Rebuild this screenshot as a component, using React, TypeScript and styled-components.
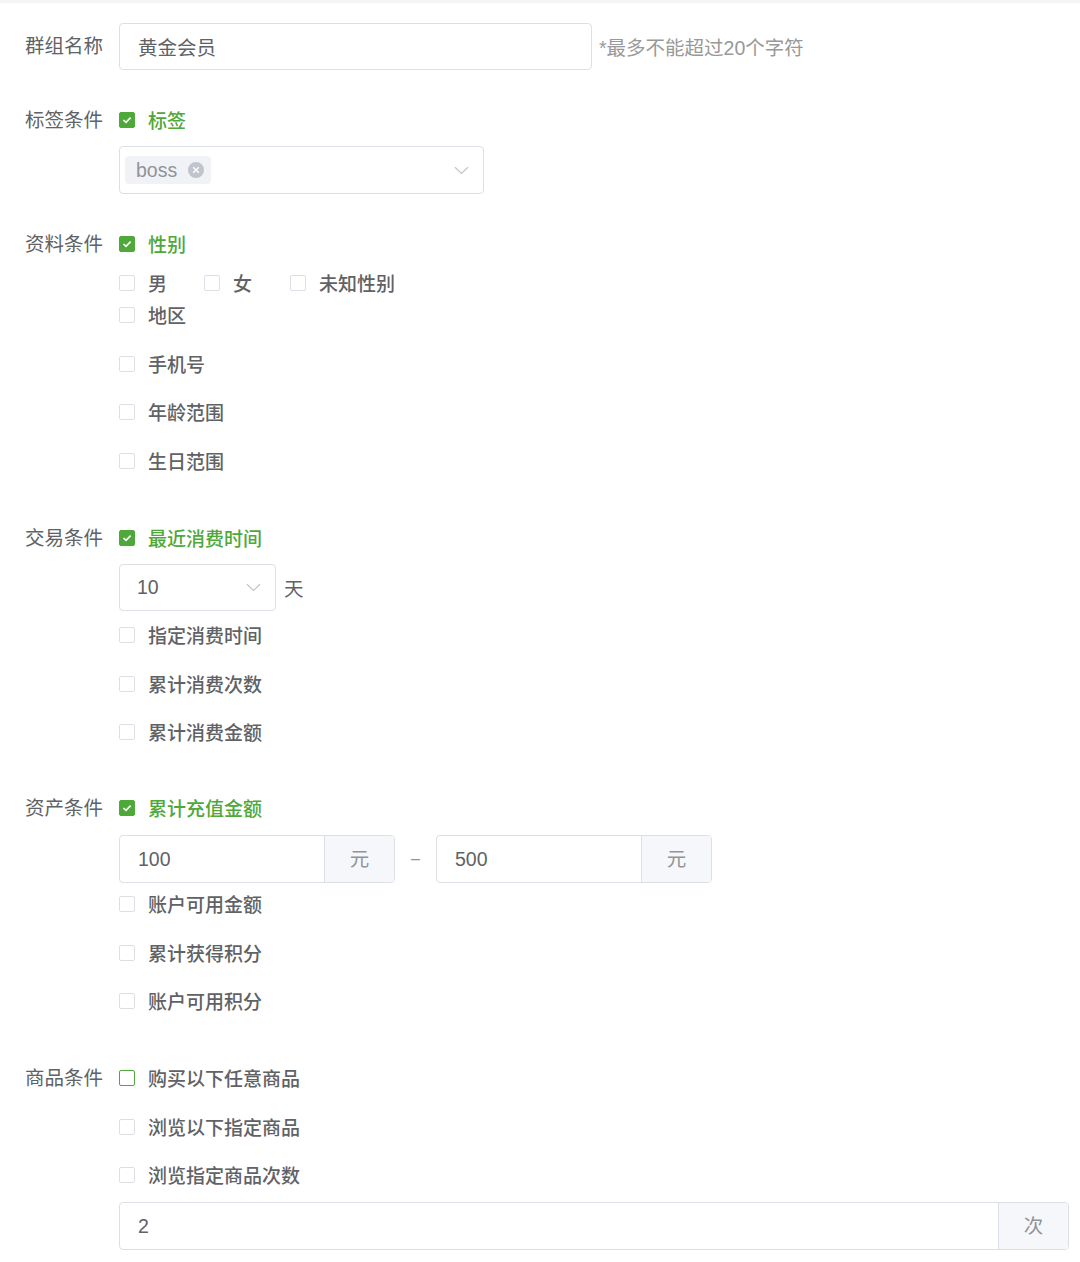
import React from "react";
import styled, { createGlobalStyle } from "styled-components";

const GlobalStyle = createGlobalStyle`
  html, body {
    margin: 0;
    padding: 0;
    background: #fff;
  }
  body {
    font-family: "Helvetica Neue", "Liberation Sans", "Noto Sans CJK SC", sans-serif;
    color: #606266;
  }
`;

const Page = styled.div`
  border-top: 3px solid #f4f5f7;
  padding: 20px 12px 12px 25px;
`;

const FormItem = styled.div<{ $gap: number }>`
  display: flex;
  align-items: flex-start;
  margin-bottom: ${(p) => p.$gap}px;
`;

const Label = styled.div<{ $line: number }>`
  width: 94px;
  flex-shrink: 0;
  font-size: 19.5px;
  line-height: ${(p) => p.$line}px;
  color: #606266;
  white-space: nowrap;
`;

const Content = styled.div`
  flex: 1;
  display: flex;
  flex-direction: column;
  align-items: flex-start;
`;

const Row = styled.div<{ $mt?: number }>`
  display: flex;
  align-items: center;
  margin-top: ${(p) => p.$mt ?? 0}px;
`;

const TextInput = styled.div<{ $width: number }>`
  box-sizing: border-box;
  width: ${(p) => p.$width}px;
  height: 47px;
  border: 1px solid #dcdfe6;
  border-radius: 4px;
  padding: 0 18px;
  display: flex;
  align-items: center;
  font-size: 19.5px;
  color: #606266;
`;

const Hint = styled.span`
  margin-left: 7px;
  font-size: 19.5px;
  color: #999;
`;

const CheckLine = styled.label<{ $mt?: number; $mr?: number }>`
  display: flex;
  align-items: center;
  height: 32px;
  margin-top: ${(p) => p.$mt ?? 0}px;
  margin-right: ${(p) => p.$mr ?? 0}px;
  cursor: pointer;
`;

const Box = styled.span<{ $checked?: boolean; $focus?: boolean }>`
  box-sizing: border-box;
  width: 16px;
  height: 16px;
  border-radius: 2px;
  border: 1px solid
    ${(p) => (p.$checked || p.$focus ? "#4fa83a" : "#dcdfe6")};
  background: ${(p) => (p.$checked ? "#4fa83a" : "#fff")};
  display: flex;
  align-items: center;
  justify-content: center;
  margin-right: 13px;
`;

const CheckText = styled.span<{ $checked?: boolean }>`
  font-size: 19px;
  font-weight: 500;
  color: ${(p) => (p.$checked ? "#4fa83a" : "#606266")};
  white-space: nowrap;
  margin-top: -1px;
`;

const SelectBox = styled.div<{ $width: number; $height: number }>`
  box-sizing: border-box;
  width: ${(p) => p.$width}px;
  height: ${(p) => p.$height}px;
  border: 1px solid #dcdfe6;
  border-radius: 4px;
  display: flex;
  align-items: center;
  justify-content: space-between;
  padding: 0 14px 0 5px;
  font-size: 19.5px;
  color: #606266;
`;

const SelectValue = styled.span`
  padding-left: 12px;
`;

const Tag = styled.span`
  display: inline-flex;
  align-items: center;
  height: 28px;
  padding: 0 7px 0 11px;
  border-radius: 4px;
  background: #f0f2f5;
  color: #909399;
  font-size: 19.5px;
`;

const TagClose = styled.span`
  width: 16px;
  height: 16px;
  border-radius: 50%;
  background: #c0c4cc;
  margin-left: 11px;
  display: inline-flex;
  align-items: center;
  justify-content: center;
`;

const Unit = styled.span`
  margin-left: 8px;
  font-size: 19.5px;
  color: #606266;
`;

const InputGroup = styled.div<{ $width: number }>`
  box-sizing: border-box;
  width: ${(p) => p.$width}px;
  height: 48px;
  border: 1px solid #dcdfe6;
  border-radius: 4px;
  display: flex;
  overflow: hidden;
`;

const GroupField = styled.div`
  flex: 1;
  display: flex;
  align-items: center;
  padding: 0 18px;
  font-size: 19.5px;
  color: #606266;
`;

const Append = styled.div`
  width: 70px;
  border-left: 1px solid #dcdfe6;
  background: #f5f7fa;
  display: flex;
  align-items: center;
  justify-content: center;
  padding-bottom: 4px;
  box-sizing: border-box;
  font-size: 19.5px;
  color: #909399;
`;

const RangeDash = styled.span`
  width: 41px;
  text-align: center;
  color: #909399;
  font-size: 16px;
`;

const Arrow = () => (
  <svg width="15" height="9" viewBox="0 0 15 9" fill="none">
    <path d="M1 1.2 L7.5 7.5 L14 1.2" stroke="#c0c4cc" strokeWidth="1.2" />
  </svg>
);

const Tick = () => (
  <svg width="10" height="8" viewBox="0 0 10 8" fill="none">
    <path d="M1.5 4 L4 6.4 L8.6 1.6" stroke="#fff" strokeWidth="1.6" />
  </svg>
);

const CloseX = () => (
  <svg width="8" height="8" viewBox="0 0 8 8">
    <path d="M1.2 1.2 L6.8 6.8 M6.8 1.2 L1.2 6.8" stroke="#fff" strokeWidth="1.4" />
  </svg>
);

type CheckProps = {
  text: string;
  checked?: boolean;
  focus?: boolean;
  mt?: number;
  mr?: number;
};

const Check: React.FC<CheckProps> = ({ text, checked, focus, mt, mr }) => (
  <CheckLine $mt={mt} $mr={mr}>
    <Box $checked={checked} $focus={focus}>
      {checked && <Tick />}
    </Box>
    <CheckText $checked={checked}>{text}</CheckText>
  </CheckLine>
);

// vertical space between stacked checkbox lines
const STEP = 16.5;

const App: React.FC = () => {
  return (
    <Page>
      <GlobalStyle />

      <FormItem $gap={34}>
        <Label $line={47}>群组名称</Label>
        <Content>
          <Row>
            <TextInput $width={473}>黄金会员</TextInput>
            <Hint>*最多不能超过20个字符</Hint>
          </Row>
        </Content>
      </FormItem>

      <FormItem $gap={34}>
        <Label $line={32}>标签条件</Label>
        <Content>
          <Check text="标签" checked />
          <Row $mt={10}>
            <SelectBox $width={365} $height={48}>
              <Tag>
                boss
                <TagClose>
                  <CloseX />
                </TagClose>
              </Tag>
              <Arrow />
            </SelectBox>
          </Row>
        </Content>
      </FormItem>

      <FormItem $gap={45.5}>
        <Label $line={32}>资料条件</Label>
        <Content>
          <Check text="性别" checked />
          <Row $mt={7}>
            <Check text="男" mr={37} />
            <Check text="女" mr={38} />
            <Check text="未知性别" />
          </Row>
          <Check text="地区" />
          <Check text="手机号" mt={STEP} />
          <Check text="年龄范围" mt={STEP} />
          <Check text="生日范围" mt={STEP} />
        </Content>
      </FormItem>

      <FormItem $gap={44}>
        <Label $line={32}>交易条件</Label>
        <Content>
          <Check text="最近消费时间" checked />
          <Row $mt={10}>
            <SelectBox $width={157} $height={47}>
              <SelectValue>10</SelectValue>
              <Arrow />
            </SelectBox>
            <Unit>天</Unit>
          </Row>
          <Check text="指定消费时间" mt={8} />
          <Check text="累计消费次数" mt={STEP} />
          <Check text="累计消费金额" mt={STEP} />
        </Content>
      </FormItem>

      <FormItem $gap={45}>
        <Label $line={32}>资产条件</Label>
        <Content>
          <Check text="累计充值金额" checked />
          <Row $mt={11}>
            <InputGroup $width={276}>
              <GroupField>100</GroupField>
              <Append>元</Append>
            </InputGroup>
            <RangeDash>–</RangeDash>
            <InputGroup $width={276}>
              <GroupField>500</GroupField>
              <Append>元</Append>
            </InputGroup>
          </Row>
          <Check text="账户可用金额" mt={5} />
          <Check text="累计获得积分" mt={STEP} />
          <Check text="账户可用积分" mt={STEP} />
        </Content>
      </FormItem>

      <FormItem $gap={0}>
        <Label $line={32}>商品条件</Label>
        <Content>
          <Check text="购买以下任意商品" focus />
          <Check text="浏览以下指定商品" mt={STEP} />
          <Check text="浏览指定商品次数" mt={STEP} />
          <Row $mt={11}>
            <InputGroup $width={950}>
              <GroupField>2</GroupField>
              <Append>次</Append>
            </InputGroup>
          </Row>
        </Content>
      </FormItem>
    </Page>
  );
};

export default App;
